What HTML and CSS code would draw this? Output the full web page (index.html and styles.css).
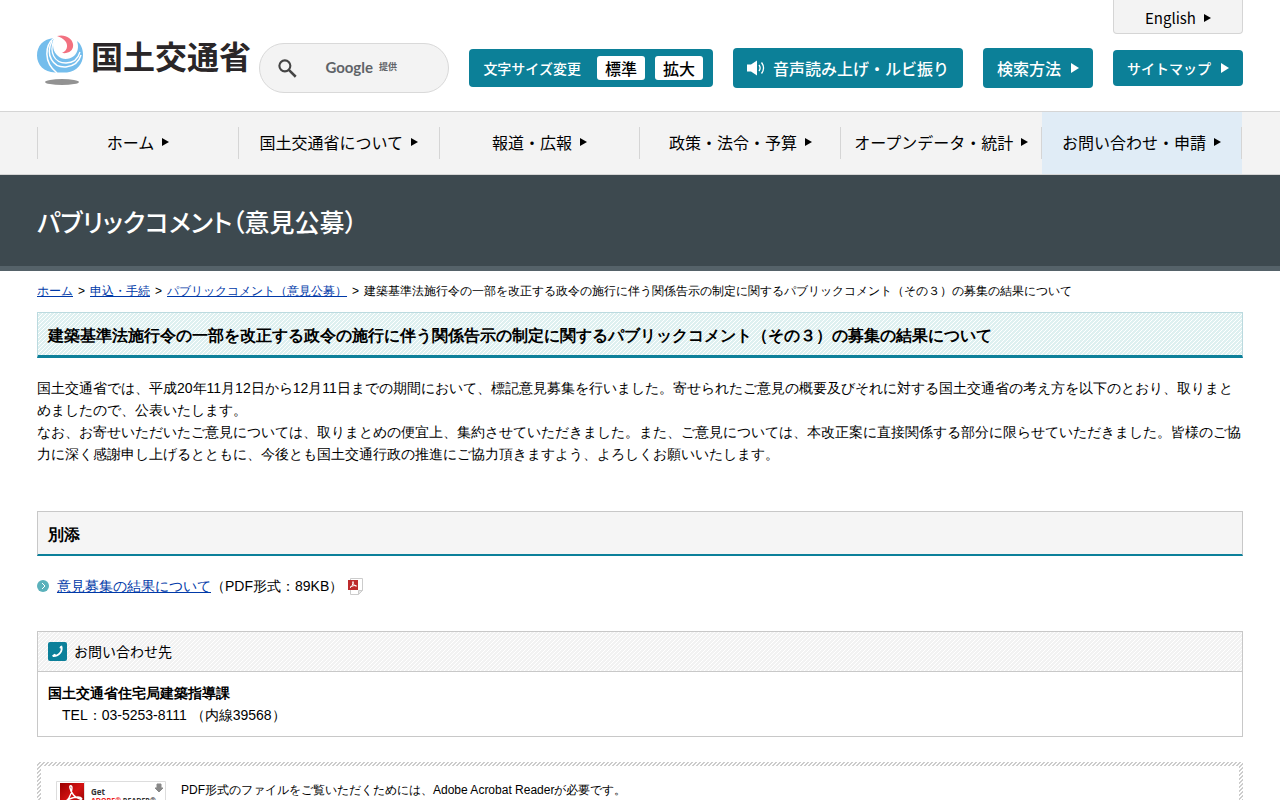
FILE: index.html
```html
<!DOCTYPE html>
<html lang="ja">
<head>
<meta charset="utf-8">
<meta name="viewport" content="width=device-width, initial-scale=1">
<title>パブリックコメント（意見公募） - 国土交通省</title>
<link rel="stylesheet" href="styles.css">
</head>
<body>
<header class="header">
  <a class="logo" href="#">
    <svg class="logo-mark" viewBox="0 0 46 50" aria-hidden="true">
      <path d="M17 3C6 4 0 11 0 20.500 0 30 7 37 18 37.500h12C40 36 46 29 46 20c0-6-2-11-6-14 2 6 1 11-3 15-5 4-12 4-16 0-5-4-6-11-4-18z" fill="#74bdec"/>
      <path d="M17 3C8 10 6 27 20 38" fill="none" stroke="#fff" stroke-width="1.500"/>
      <path d="M15 6C8 20 16 33 29 32c8-1 13-5 15-12" fill="none" stroke="#fff" stroke-width="1.500"/>
      <path d="M17 5c-5 12 0 23 12 23 7 0 12-4 14-11" fill="none" stroke="#fff" stroke-width="1.300"/>
      <path d="M20 1c8-2 15 2 16 8 1 6-4 10-11 9 7-3 8-13-5-17z" fill="#f27180"/>
      <ellipse cx="25" cy="47" rx="17" ry="3" fill="#929292"/>
    </svg>
    <span class="logo-text">国土交通省</span>
  </a>
  <div class="tools">
    <a class="english" href="#">English<span class="arrow"></span></a>
    <div class="tool-row">
      <form class="search" role="search">
        <button class="search-button" type="button" aria-label="検索">
          <svg viewBox="0 0 18 18" aria-hidden="true"><circle cx="6.5" cy="6.5" r="5.2" fill="none" stroke="#444" stroke-width="2"/><path d="M10.5 10.5l6.3 6.3" stroke="#444" stroke-width="2.400"/></svg>
        </button>
        <input class="search-input" id="q" type="text">
        <label class="search-label" for="q"><span class="google">Google</span><span class="by">提供</span></label>
      </form>
      <div class="tool size">
        <span>文字サイズ変更</span>
        <button class="size-button first" type="button">標準</button>
        <button class="size-button" type="button">拡大</button>
      </div>
      <a class="tool large" href="#">
        <svg class="speaker" viewBox="0 0 18 16" aria-hidden="true"><path d="M0 4.5h4L10 .5v15L4 11.500H0z" fill="#fff"/><path d="M12 5c1.500 2 1.500 4 0 6M14.500 2.500c2.600 3.500 2.600 7.500 0 11" fill="none" stroke="#fff" stroke-width="1.300"/></svg>
        音声読み上げ・ルビ振り
      </a>
      <a class="tool large" href="#">検索方法<span class="arrow"></span></a>
      <a class="tool small" href="#">サイトマップ<span class="arrow"></span></a>
    </div>
  </div>
</header>
<nav class="nav">
  <ul class="nav-list">
    <li><a href="#">ホーム<span class="arrow"></span></a></li>
    <li><a href="#">国土交通省について<span class="arrow"></span></a></li>
    <li><a href="#">報道・広報<span class="arrow"></span></a></li>
    <li><a href="#">政策・法令・予算<span class="arrow"></span></a></li>
    <li><a href="#">オープンデータ・統計<span class="arrow"></span></a></li>
    <li class="current"><a href="#">お問い合わせ・申請<span class="arrow"></span></a></li>
  </ul>
</nav>
<div class="band"><p class="band-title">パブリックコメント（意見公募）</p></div>
<div class="breadcrumb"><a href="#">ホーム</a><span>&gt;</span><a href="#">申込・手続</a><span>&gt;</span><a href="#">パブリックコメント（意見公募）</a><span>&gt;</span>建築基準法施行令の一部を改正する政令の施行に伴う関係告示の制定に関するパブリックコメント（その３）の募集の結果について</div>
<main class="main">
  <h1 class="title">建築基準法施行令の一部を改正する政令の施行に伴う関係告示の制定に関するパブリックコメント（その３）の募集の結果について</h1>
  <p class="text">国土交通省では、平成20年11月12日から12月11日までの期間において、標記意見募集を行いました。寄せられたご意見の概要及びそれに対する国土交通省の考え方を以下のとおり、取りまとめましたので、公表いたします。<br>なお、お寄せいただいたご意見については、取りまとめの便宜上、集約させていただきました。また、ご意見については、本改正案に直接関係する部分に限らせていただきました。皆様のご協力に深く感謝申し上げるとともに、今後とも国土交通行政の推進にご協力頂きますよう、よろしくお願いいたします。</p>
  <h2 class="section-title">別添</h2>
  <ul class="files">
    <li>
      <svg class="bullet" viewBox="0 0 12 12" aria-hidden="true"><circle cx="6" cy="6" r="6" fill="#5bb1bb"/><path d="M5 3l3 3-3 3" fill="none" stroke="#fff"/></svg>
      <span><a href="#">意見募集の結果について</a>（PDF形式：89KB）</span>
      <svg class="pdf" viewBox="0 0 15 17" aria-hidden="true"><path d="M2.500.5h12v12l-4 4h-8z" fill="#fff" stroke="#ccc"/><path d="M14.500 12.500h-4v4z" fill="#e6e6e6" stroke="#ccc"/><path d="M0 2h10v10H0z" fill="#bd2b2d"/><path d="M2 9.500c2-1 3-3 3-6 0 3 1 4 3.500 4.500C6 7 4 8 2 9.500z" fill="none" stroke="#fff"/></svg>
    </li>
  </ul>
  <section class="contact">
    <h2 class="contact-title">
      <svg class="phone" viewBox="0 0 19 19" aria-hidden="true"><rect width="19" height="19" rx="2" fill="#0c809a"/><path d="M12.200 4.200l1.800-.7c2.500 5.500-2.500 12-9 11.600l-.9-1.500 2.400-1.900 1.700 1c2.600-.8 4.800-3.500 4.500-6.200l-1.300-.6z" fill="#fff"/></svg>
      <span>お問い合わせ先</span>
    </h2>
    <div class="contact-body">
      <strong>国土交通省住宅局建築指導課</strong>
      <span class="tel">TEL：03-5253-8111 （内線39568）</span>
    </div>
  </section>
  <aside class="reader">
    <div class="reader-inner">
      <a class="reader-banner" href="#">
        <svg viewBox="0 0 110 38" role="img" aria-label="Get Adobe Reader">
          <defs><linearGradient id="red" x2="1" y2="1"><stop stop-color="#900"/><stop offset=".5" stop-color="#d41212"/><stop offset="1" stop-color="#800"/></linearGradient></defs>
          <path d="M.5.5h109v37H.5z" fill="#fff" stroke="#ddd"/>
          <path d="M28.500 1v36" stroke="#e2e2e2"/>
          <path d="M4 2h24v24H4z" fill="url(#red)"/>
          <path d="M7 23c4-2 9-9 9-16 0-3-3-3-2 0 1 5 5 10 10 11 3 1 2-2-2-2-5 0-13 3-15 7z" fill="none" stroke="#fff" stroke-width="1.400"/>
          <text class="banner-text" x="35" y="14">Get</text>
          <text class="banner-name" x="35" y="22"><tspan fill="#e22">ADOBE®</tspan> READER®</text>
          <path d="M101 3h4v4h2l-4 4-4-4h2z" fill="#888" stroke="#888"/>
        </svg>
      </a>
      <p class="reader-text">PDF形式のファイルをご覧いただくためには、Adobe Acrobat Readerが必要です。</p>
    </div>
  </aside>
</main>
</body>
</html>
```
FILE: styles.css
```css
* { box-sizing: border-box; }
body {
  margin: 0;
  background: #fff;
  color: #000;
  font: 14px/22px "Liberation Sans", sans-serif;
}
p, h1, h2, ul { margin: 0; padding: 0; }
ul { list-style: none; }
svg { display: block; flex: none; }
a { color: #0039a8; }
.header, .nav, .band { font-family: "Noto Sans CJK JP", sans-serif; }
.header {
  display: flex;
  justify-content: space-between;
  padding: 0 37px 18px;
}
.header a, .nav a { color: #000; text-decoration: none; white-space: nowrap; }
.logo { display: flex; gap: 8px; padding-top: 35px; }
.logo-mark { width: 46px; height: 50px; }
.logo-text { font-size: 32px; line-height: 40px; font-weight: 700; color: #2a2628; }
.header .logo-text { color: #2a2628; }
.tools { display: flex; flex-direction: column; align-items: flex-end; gap: 9px; }
.arrow {
  display: inline-block;
  margin-left: 8px;
  border-left: 7px solid currentColor;
  border-top: 4px solid transparent;
  border-bottom: 4px solid transparent;
}
.english {
  display: flex;
  align-items: center;
  justify-content: center;
  width: 130px;
  height: 34px;
  padding-top: 3px;
  border: 1px solid #d5d5d5;
  border-top: 0;
  border-radius: 0 0 4px 4px;
  background: #f3f3f3;
  font-size: 15px;
}
.tool-row { display: flex; align-items: center; gap: 20px; }
.search {
  position: relative;
  display: flex;
  align-items: center;
  width: 190px;
  height: 50px;
  padding: 0 18px;
  border: 1px solid #d9d9d9;
  border-radius: 25px;
  background: #f3f3f3;
}
.search-button { width: 20px; padding: 0; border: 0; background: none; }
.search-button svg { width: 19px; height: 19px; }
.search-input { flex: 1; min-width: 0; height: 40px; border: 0; background: none; font-size: 16px; }
.search-label {
  position: absolute;
  left: 65px;
  top: 12px;
  display: flex;
  align-items: center;
  gap: 6px;
  color: #5f6368;
}
.google { font: 700 15px/22px Lato, sans-serif; }
.by { font-size: 9px; font-weight: 700; }
.tool {
  display: flex;
  align-items: center;
  padding: 0 14px;
  border-radius: 4px;
  background: #0c8098;
  color: #fff;
  font-weight: 500;
  white-space: nowrap;
}
.header .tool { color: #fff; }
.tool .arrow { margin-left: 10px; border-left-width: 8px; border-top-width: 5px; border-bottom-width: 5px; }
.size { height: 38px; gap: 10px; padding-right: 10px; }
.large { height: 40px; font-size: 16px; }
.small { height: 36px; }
.size-button {
  width: 48px;
  height: 24px;
  padding: 0;
  border: 0;
  border-radius: 3px;
  background: #fff;
  color: #000;
  font: 500 16px/22px "Noto Sans CJK JP", sans-serif;
}
.first { margin-left: 6px; }
.speaker { width: 18px; height: 16px; margin-right: 8px; }
.nav {
  padding: 0 38px 0 37px;
  border-top: 1px solid #d5d5d5;
  border-bottom: 1px solid #d5d5d5;
  background: #f3f3f3;
  font-size: 16px;
}
.nav-list { display: grid; grid-template-columns: repeat(6, 1fr); }
.nav-list li { padding: 15px 0; }
.nav-list a {
  display: flex;
  align-items: center;
  justify-content: center;
  height: 32px;
  padding-bottom: 2px;
  border-left: 1px solid #d5d5d5;
}
.current { background: linear-gradient(#e0ecf6, #e0ecf6) 1px 0 no-repeat; }
.nav-list .current a { border-right: 1px solid #d5d5d5; }
.band { padding: 28px 37px 27px; border-bottom: 5px solid #556269; background: #3d494f; }
.band-title { color: #fff; font-size: 25px; font-weight: 500; line-height: 36px; font-feature-settings: "palt"; }
.breadcrumb { padding: 10px 37px; font-size: 12px; line-height: 21px; }
.breadcrumb span { margin: 0 5px; }
.main { padding: 0 37px 30px; }
.title {
  padding: 12px 10px 8px;
  border: 1px solid #bbdadf;
  border-bottom: 3px solid #0c809a;
  background: linear-gradient(135deg, #fff 13%, #def0f0 13% 50%, #fff 50% 63%, #def0f0 63%) 0 0 / 4px 4px;
  font-size: 16px;
  line-height: 22px;
}
.text { margin: 19px 0 46px; }
.section-title {
  padding: 12px 10px 8px;
  border: 1px solid #c8c8c8;
  border-bottom: 2px solid #0c809a;
  background: #f5f5f5;
  font-size: 16px;
}
.files { padding: 19px 0 34px; }
.files li { display: flex; align-items: center; }
.bullet { width: 12px; height: 12px; margin-right: 8px; }
.pdf { width: 15px; height: 17px; margin-left: 5px; }
.contact { border: 1px solid #c8c8c8; }
.contact-title {
  display: flex;
  align-items: center;
  gap: 7px;
  height: 40px;
  padding: 0 10px;
  border-bottom: 1px solid #c8c8c8;
  background: linear-gradient(135deg, #fff 13%, #f2f2f2 13% 50%, #fff 50% 63%, #f2f2f2 63%) 0 0 / 4px 4px;
  font: 400 14px/22px "Noto Sans CJK JP", sans-serif;
}
.contact-title span { padding-bottom: 2px; }
.phone { width: 19px; height: 19px; }
.contact-body { display: flex; flex-direction: column; padding: 10px; }
.tel { padding-left: 14px; }
.reader {
  margin-top: 25px;
  padding: 4px;
  background: linear-gradient(135deg, #fff 25%, #ccc 25% 50%, #fff 50% 75%, #ccc 75%) 0 0 / 4px 4px;
}
.reader-inner { display: flex; gap: 15px; padding: 15px; background: #fff; }
.reader-banner svg { width: 110px; height: 38px; }
.reader-text { font-size: 12px; line-height: 18px; }
.banner-text { font: 700 8px "Open Sans", sans-serif; fill: #333; }
.banner-name { font: 700 7px "Open Sans", sans-serif; fill: #333; }
```
